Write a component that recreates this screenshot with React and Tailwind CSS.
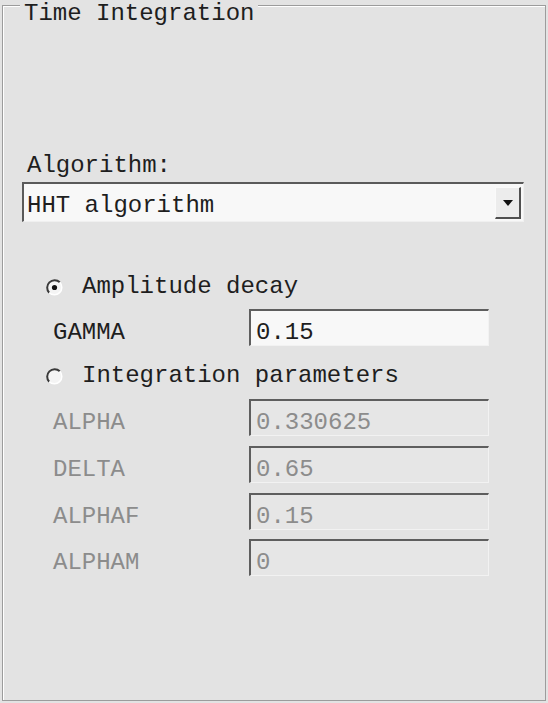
import React from 'react';

// Classic Win32 style "Time Integration" group box

const Radio = ({ checked }) => (
    <svg width="17" height="17" viewBox="0 0 17 17" className="shrink-0">
        <circle cx="8.5" cy="8.5" r="7" fill="#f4f4f4" />
        <path d="M3.2 13.8 A7.5 7.5 0 0 1 13.8 3.2" fill="none" stroke="#3a3a3a" strokeWidth="2" />
        <path d="M13.8 3.2 A7.5 7.5 0 0 1 3.2 13.8" fill="none" stroke="#ffffff" strokeWidth="1.5" />
        {checked && <circle cx="8.5" cy="8.5" r="2.6" fill="#111111" />}
    </svg>
);

const Field = ({ label, value, disabled, className }) => (
    <div className={`flex items-start ${className}`}>
        <span className={`ml-[50px] w-[196px] pt-[12px] leading-[24px] ${disabled ? 'text-[#8c8c8c]' : 'text-[#1e1e1e]'}`}>
            {label}
        </span>
        <div
            className={`w-[240px] h-[37px] border-t-2 border-l-2 border-b border-r border-t-[#5e5e5e] border-l-[#5e5e5e] border-b-[#f2f2f2] border-r-[#f2f2f2] pl-[5px] pt-[10px] leading-[24px] ${
                disabled ? 'bg-[#e6e6e6] text-[#8c8c8c]' : 'bg-[#f8f8f8] text-[#1e1e1e]'
            }`}
        >
            {value}
        </div>
    </div>
);

const App = () => {
    return (
        <div className="w-[548px] h-[703px] bg-[#e3e3e3] pt-[5px] font-['Liberation_Mono',monospace] text-[24px] text-[#1e1e1e] overflow-hidden">
            <div className="relative ml-[2px] w-[544px] h-[696px] border border-[#9c9c9c] shadow-[inset_1px_1px_0_#ffffff]">
                <div className="absolute left-[17px] top-[-4px] px-[4px] bg-[#e3e3e3] leading-[24px]">
                    Time Integration
                </div>

                <div className="pl-[24px] pt-[148px] leading-[24px]">Algorithm:</div>

                <div className="mt-[4px] ml-[19px] w-[502px] h-[40px] flex items-start bg-[#f8f8f8] border-t-2 border-l-2 border-b border-r border-t-[#5a5a5a] border-l-[#5a5a5a] border-b-[#f0f0f0] border-r-[#f0f0f0]">
                    <span className="flex-1 pl-[3px] pt-[10px] leading-[24px]">HHT algorithm</span>
                    <div className="mt-[3px] mr-[2px] w-[26px] h-[32px] flex items-center justify-center bg-[#ececec] border-t border-l border-b-2 border-r-2 border-t-[#fafafa] border-l-[#fafafa] border-b-[#505050] border-r-[#505050]">
                        <svg width="10" height="6" viewBox="0 0 10 6">
                            <path d="M0 0 H10 L5 6 Z" fill="#111111" />
                        </svg>
                    </div>
                </div>

                <div className="mt-[53px] ml-[43px] flex items-center gap-[19px] leading-[24px]">
                    <Radio checked />
                    <span>Amplitude decay</span>
                </div>

                <Field label="GAMMA" value="0.15" className="mt-[10px]" />

                <div className="mt-[18px] ml-[43px] flex items-center gap-[19px] leading-[24px]">
                    <Radio />
                    <span>Integration parameters</span>
                </div>

                <Field label="ALPHA" value="0.330625" disabled className="mt-[11px]" />
                <Field label="DELTA" value="0.65" disabled className="mt-[10px]" />
                <Field label="ALPHAF" value="0.15" disabled className="mt-[10px]" />
                <Field label="ALPHAM" value="0" disabled className="mt-[9px]" />
            </div>
        </div>
    );
};

export default App;
